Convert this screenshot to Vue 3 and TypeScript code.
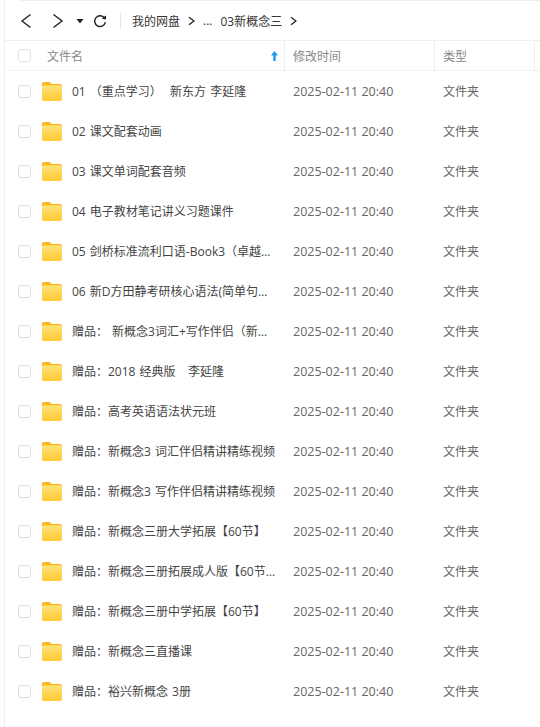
<script setup lang="ts">
const names: string[] = [
  '01 （重点学习）  新东方 李延隆',
  '02 课文配套动画',
  '03 课文单词配套音频',
  '04 电子教材笔记讲义习题课件',
  '05 剑桥标准流利口语-Book3（卓越…',
  '06 新D方田静考研核心语法(简单句…',
  '赠品： 新概念3词汇+写作伴侣（新…',
  '赠品：2018 经典版   李延隆',
  '赠品：高考英语语法状元班',
  '赠品：新概念3 词汇伴侣精讲精练视频',
  '赠品：新概念3 写作伴侣精讲精练视频',
  '赠品：新概念三册大学拓展【60节】',
  '赠品：新概念三册拓展成人版【60节…',
  '赠品：新概念三册中学拓展【60节】',
  '赠品：新概念三直播课',
  '赠品：裕兴新概念 3册',
]
</script>

<template>
  <div class="page">
    <div class="topline"></div>
    <div class="toolbar">
      <svg class="nav back" width="12" height="16" viewBox="0 0 12 16"><path d="M10.500 1.500 2 8l8.500 6.500" /></svg>
      <svg class="nav fwd" width="12" height="16" viewBox="0 0 12 16"><path d="M1.500 1.500 10 8l-8.500 6.500" /></svg>
      <svg class="caret" width="8" height="6" viewBox="0 0 8 6"><path d="M0.500 1h7L4 5.500z" /></svg>
      <svg class="refresh" width="14" height="14" viewBox="0 0 14 14">
        <path class="arc" d="M11.600 4.200A5.400 5.400 0 1 0 12.400 8" />
        <path class="tip" d="M8.600 4.600 13 1.400v4.200z" />
      </svg>
      <span class="sep"></span>
      <span class="crumb">我的网盘</span>
      <svg class="chev first" width="7" height="10" viewBox="0 0 7 10"><path d="M1 1.200 6 5 1 8.800" /></svg>
      <span class="crumb dots">...</span>
      <span class="crumb current">03新概念三</span>
      <svg class="chev last" width="7" height="10" viewBox="0 0 7 10"><path d="M1 1.200 6 5 1 8.800" /></svg>
    </div>
    <div class="head">
      <div class="cell-check"><span class="check head-check"></span></div>
      <div class="col-name head-cell">
        <span>文件名</span>
        <svg class="sort" width="7" height="10" viewBox="0 0 7 10"><path d="M3.500 0 7 4.500H4.700V10H2.300V4.500H0z" /></svg>
      </div>
      <div class="col-time head-cell">修改时间</div>
      <div class="col-type head-cell">类型</div>
      <div class="col-rest"></div>
    </div>
    <div class="row" v-for="name in names" :key="name">
      <div class="cell-check"><span class="check"></span></div>
      <div class="col-name name-cell">
        <svg class="folder" width="20" height="19" viewBox="0 0 20 19">
          <path d="M0 2.200C0 .9.900 0 2.200 0h4.600c.7 0 1.200.3 1.600.8L9.600 2h8.200C19.100 2 20 2.900 20 4.200V16.800c0 1.300-.9 2.200-2.200 2.200H2.200C.9 19 0 18.100 0 16.800z" fill="#f9b61e" />
          <path d="M0 5.200C0 4.100.8 3.300 1.900 3.300h16.200c1.100 0 1.900.8 1.900 1.900V16.800c0 1.300-.9 2.200-2.200 2.200H2.200C.9 19 0 18.100 0 16.800z" fill="url(#fg)" />
          <defs>
            <linearGradient id="fg" x1="0" y1="0" x2="0" y2="1">
              <stop offset="0" stop-color="#ffe27a" />
              <stop offset="1" stop-color="#ffc933" />
            </linearGradient>
          </defs>
        </svg>
        <span class="name">{{ name }}</span>
      </div>
      <div class="col-time text date">2025-02-11 20:40</div>
      <div class="col-type text">文件夹</div>
    </div>
  </div>
</template>

<style>
html, body { margin: 0; background: #fff; }
</style>

<style scoped>
.page {
  height: 727px;
  overflow: hidden;
  box-sizing: border-box;
  border-left: 1px solid #f0f0f0;
  margin-left: 4px;
  width: 536px;
  font-family: "Open Sans", "Noto Sans CJK SC", "Liberation Sans", sans-serif;
  font-size: 12px;
  color: #666;
}
.topline {
  height: 1px;
  margin-left: 16px;
  background: #eee;
}
.toolbar {
  height: 40px;
  display: flex;
  align-items: center;
  box-sizing: border-box;
  border-bottom: 1px solid #efefef;
  padding-left: 15px;
}
.nav path, .chev path {
  fill: none;
  stroke: #222;
  stroke-width: 1.4;
}
.fwd { margin-left: 20px; }
.caret { margin-left: 12px; }
.caret path { fill: #222; }
.refresh { margin-left: 9px; }
.arc { fill: none; stroke: #222; stroke-width: 1.4; }
.tip { fill: #222; }
.sep {
  width: 1px;
  height: 16px;
  background: #e6e6e6;
  margin-left: 13px;
  margin-right: 11px;
}
.crumb { color: #333; font-size: 12px; }
.chev { margin-left: 8px; }
.dots { margin-left: 8px; }
.current { margin-left: 8px; }
.last { margin-left: 8px; }
.head {
  height: 30px;
  display: flex;
  align-items: stretch;
  box-sizing: border-box;
  border-bottom: 1px solid #f2f2f2;
}
.cell-check {
  width: 37px;
  display: flex;
  align-items: center;
  padding-left: 13px;
  box-sizing: border-box;
  flex: none;
}
.check {
  width: 13px;
  height: 13px;
  box-sizing: border-box;
  border: 1px solid #dcdcdc;
  border-radius: 3px;
  background: #fff;
}
.head-check { border-color: #e2e2e2; }
.col-name { width: 242px; flex: none; box-sizing: border-box; }
.col-time { width: 150px; flex: none; box-sizing: border-box; padding-left: 9px; }
.col-type { width: 100px; flex: none; box-sizing: border-box; padding-left: 9px; }
.col-rest { flex: 1; border-left: 1px solid #eee; }
.head-cell {
  display: flex;
  align-items: center;
  color: #888;
}
.head-cell.col-time, .head-cell.col-type { border-left: 1px solid #eee; padding-left: 8px; }
.head-cell.col-name { padding-left: 5px; justify-content: space-between; padding-right: 6px; }
.sort path { fill: #1a97f5; }
.row {
  height: 40px;
  display: flex;
  align-items: center;
}
.name-cell {
  display: flex;
  align-items: center;
  gap: 10px;
}
.folder { flex: none; }
.name { color: #444; white-space: pre; word-spacing: 1px; }
.text { color: #666; }
.date { font-size: 12.5px; }
</style>
